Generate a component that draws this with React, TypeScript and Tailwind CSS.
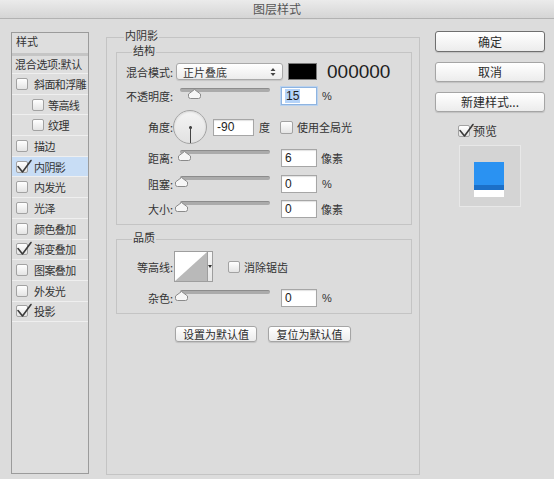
import type { ReactNode } from 'react';

function Check({ checked, className = '' }: { checked?: boolean; className?: string }) {
  return (
    <span
      className={`relative inline-block w-[12px] h-[12px] shrink-0 rounded-[2px] border border-[#a2a2a2] bg-linear-to-b from-[#ffffff] to-[#e4e4e4] ${className}`}
    >
      {checked && (
        <svg className="absolute left-[-1px] top-[-2px] overflow-visible" width="16" height="14" viewBox="0 0 16 14">
          <path d="M2 6.5 L6.5 12 L15 0.5" fill="none" stroke="#3a3a3a" strokeWidth="1.6" strokeLinecap="round" strokeLinejoin="round" />
        </svg>
      )}
    </span>
  );
}

function Slider({ pos }: { pos: number }) {
  return (
    <div className="relative w-[90px] h-[18px] shrink-0">
      <div className="absolute left-0 right-0 top-[1px] h-[4px] rounded-full bg-[#ababab] border-t border-[#8c8c8c]" />
      <svg className="absolute top-[2px]" style={{ left: pos - 6 }} width="13" height="10" viewBox="0 0 13 10">
        <path d="M6.5 0.5 L12.5 5 V7.5 Q12.5 9.5 10.5 9.5 H2.5 Q0.5 9.5 0.5 7.5 V5 Z" fill="#f6f6f6" stroke="#8a8a8a" />
      </svg>
    </div>
  );
}

function NumBox({ value, className = '', selected }: { value: string; className?: string; selected?: boolean }) {
  return (
    <div
      className={`flex items-center shrink-0 bg-white border pl-[3px] font-['Liberation_Sans',sans-serif] text-[12px] text-[#222] ${
        selected ? 'border-[#8fb4e0] shadow-[0_0_0_1px_#b9d2ef]' : 'border-[#a6a6a6] shadow-[inset_0_1px_1px_rgba(0,0,0,0.12)]'
      } ${className}`}
    >
      <span className={selected ? 'bg-[#b5d3f8] px-[1px] leading-[14px]' : 'leading-[14px]'}>{value}</span>
    </div>
  );
}

function Row({ label, className = '', children }: { label: string; className?: string; children: ReactNode }) {
  return (
    <div className={`flex items-center ${className}`}>
      <div className="w-[56px] shrink-0 text-right leading-[14px] whitespace-nowrap">{label}</div>
      {children}
    </div>
  );
}

function Btn({ children, className = '' }: { children: ReactNode; className?: string }) {
  return (
    <div
      className={`flex items-center justify-center shrink-0 rounded-[3px] border bg-linear-to-b from-[#ffffff] to-[#ececec] shadow-[0_1px_1px_rgba(0,0,0,0.12)] leading-none text-[#2a2a2a] ${className}`}
    >
      {children}
    </div>
  );
}

const styles = [
  { name: '斜面和浮雕', checked: false, indent: false },
  { name: '等高线', checked: false, indent: true },
  { name: '纹理', checked: false, indent: true },
  { name: '描边', checked: false, indent: false },
  { name: '内阴影', checked: true, indent: false, active: true },
  { name: '内发光', checked: false, indent: false },
  { name: '光泽', checked: false, indent: false },
  { name: '颜色叠加', checked: false, indent: false },
  { name: '渐变叠加', checked: true, indent: false },
  { name: '图案叠加', checked: false, indent: false },
  { name: '外发光', checked: false, indent: false },
  { name: '投影', checked: true, indent: false },
];

export default function App() {
  return (
    <div className="w-[554px] h-[479px] overflow-hidden flex flex-col bg-[#dcdcdc] text-[11px] text-[#333] font-['Noto_Sans_CJK_SC','Liberation_Sans',sans-serif]">
      {/* title bar */}
      <div className="h-[19px] shrink-0 flex items-center justify-center bg-linear-to-b from-[#ebebeb] to-[#d5d5d5] border-b border-[#b2b2b2] text-[12px] text-[#555]">
        图层样式
      </div>

      <div className="flex flex-1 pl-[11px]">
        {/* style list */}
        <div className="mt-[13px] w-[78px] h-[442px] shrink-0 border border-[#9b9b9b] bg-[#dedede]">
          <div className="h-[20px] pl-[4px] pt-[1px] leading-[14px]">样式</div>
          <div className="h-[3px] bg-[#c5c5c5]" />
          <div className="h-[18px] pl-[3px] pt-[1px] leading-[14px] whitespace-nowrap tracking-[-0.3px] border-b border-[#efefef]">混合选项:默认</div>
          {styles.map((s) => (
            <div
              key={s.name}
              className={`flex items-center h-[20.7px] border-b border-[#efefef] ${s.indent ? 'pl-[20px]' : 'pl-[4px]'} ${
                s.active ? 'bg-[#c8ddf5]' : ''
              }`}
            >
              <Check checked={s.checked} />
              <span className={`leading-[14px] whitespace-nowrap tracking-[-0.6px] ${s.indent ? 'ml-[4px]' : 'ml-[6px]'}`}>{s.name}</span>
            </div>
          ))}
        </div>

        {/* settings */}
        <div className="ml-[17px] mt-[18px] w-[314px] h-[438px] shrink-0 border border-[#c4c4c4]">
          <div className="-mt-[10px] ml-[17px] w-fit px-[1px] bg-[#dcdcdc] leading-[14px]">内阴影</div>

          {/* 结构 */}
          <div className="mt-[10px] ml-[9px] w-[296px] pb-[6px] border border-[#c4c4c4]">
            <div className="-mt-[10px] ml-[15px] w-fit px-[1px] bg-[#dcdcdc] leading-[14px]">结构</div>

            <Row label="混合模式:" className="mt-[6px] h-[17px]">
              <div className="ml-[3px] w-[107px] h-[17px] flex items-center justify-between pl-[6px] pr-[6px] rounded-[3px] border border-[#a9a9a9] bg-linear-to-b from-[#ffffff] to-[#ececec] shadow-[0_1px_1px_rgba(0,0,0,0.1)]">
                <span className="leading-[14px]">正片叠底</span>
                <svg width="6" height="10" viewBox="0 0 6 10">
                  <path d="M3 1 L5.5 4 H0.5 Z M3 9 L5.5 6 H0.5 Z" fill="#444" />
                </svg>
              </div>
              <div className="ml-[5px] w-[29px] h-[17px] bg-black border border-[#7a7a7a]" />
              <span className="ml-[10px] font-['Liberation_Sans',sans-serif] text-[19px] leading-none text-[#1e1e1e]">000000</span>
            </Row>

            <Row label="不透明度:" className="mt-[7px] h-[18px]">
              <div className="ml-[7px]">
                <Slider pos={14} />
              </div>
              <NumBox value="15" selected className="ml-[11px] w-[36px] h-[18px]" />
              <span className="ml-[5px] font-['Liberation_Sans',sans-serif] text-[11px]">%</span>
            </Row>

            <Row label="角度:" className="mt-[5px] h-[34px]">
              <div className="relative w-[34px] h-[34px] shrink-0 rounded-full border border-[#a4a4a4] bg-linear-to-b from-[#f4f4f4] to-[#e2e2e2] shadow-[inset_0_1px_2px_rgba(0,0,0,0.12)]">
                <div className="absolute left-[15px] top-[15px] w-[3px] h-[3px] rounded-full bg-[#333]" />
                <div className="absolute left-[16px] top-[16px] w-[1px] h-[16px] bg-[#444]" />
              </div>
              <NumBox value="-90" className="ml-[6px] w-[41px] h-[17px]" />
              <span className="ml-[5px] leading-[14px]">度</span>
              <Check className="ml-[10px] w-[13px] h-[13px]" />
              <span className="ml-[4px] leading-[14px] whitespace-nowrap">使用全局光</span>
            </Row>

            <Row label="距离:" className="mt-[5px] h-[18px]">
              <div className="ml-[7px]">
                <Slider pos={4} />
              </div>
              <NumBox value="6" className="ml-[11px] w-[36px] h-[18px]" />
              <span className="ml-[4px] leading-[14px]">像素</span>
            </Row>

            <Row label="阻塞:" className="mt-[8px] h-[18px]">
              <div className="ml-[7px]">
                <Slider pos={1} />
              </div>
              <NumBox value="0" className="ml-[11px] w-[36px] h-[18px]" />
              <span className="ml-[5px] font-['Liberation_Sans',sans-serif] text-[11px]">%</span>
            </Row>

            <Row label="大小:" className="mt-[7px] h-[18px]">
              <div className="ml-[7px]">
                <Slider pos={1} />
              </div>
              <NumBox value="0" className="ml-[11px] w-[36px] h-[18px]" />
              <span className="ml-[4px] leading-[14px]">像素</span>
            </Row>
          </div>

          {/* 品质 */}
          <div className="mt-[14px] ml-[9px] w-[296px] pb-[6px] border border-[#c4c4c4]">
            <div className="-mt-[10px] ml-[15px] w-fit px-[1px] bg-[#dcdcdc] leading-[14px]">品质</div>

            <Row label="等高线:" className="mt-[7px] h-[31px]">
              <div className="ml-[1px] w-[39px] h-[31px] shrink-0 flex border border-[#9e9e9e] bg-white">
                <svg width="32" height="29" viewBox="0 0 32 29" className="shrink-0">
                  <path d="M0 29 L32 0 V29 Z" fill="#b9b9b9" />
                </svg>
                <div className="flex-1 flex items-center justify-center border-l border-[#9e9e9e] bg-linear-to-b from-[#f8f8f8] to-[#e6e6e6]">
                  <svg width="4" height="3" viewBox="0 0 4 3">
                    <path d="M0 0 H4 L2 3 Z" fill="#333" />
                  </svg>
                </div>
              </div>
              <Check className="ml-[15px]" />
              <span className="ml-[4px] leading-[14px] whitespace-nowrap">消除锯齿</span>
            </Row>

            <Row label="杂色:" className="mt-[7px] h-[18px]">
              <div className="ml-[7px]">
                <Slider pos={1} />
              </div>
              <NumBox value="0" className="ml-[11px] w-[36px] h-[18px]" />
              <span className="ml-[5px] font-['Liberation_Sans',sans-serif] text-[11px]">%</span>
            </Row>
          </div>

          <div className="mt-[12px] flex justify-center gap-[11px]">
            <Btn className="w-[82px] h-[16px] border-[#a5a5a5]">设置为默认值</Btn>
            <Btn className="w-[83px] h-[16px] border-[#a5a5a5]">复位为默认值</Btn>
          </div>
        </div>

        {/* actions */}
        <div className="ml-[15px] w-[110px] shrink-0 flex flex-col text-[12px]">
          <Btn className="mt-[12px] h-[21px] border-[#6f6f6f]">确定</Btn>
          <Btn className="mt-[10px] h-[20px] border-[#a5a5a5]">取消</Btn>
          <Btn className="mt-[10px] h-[20px] border-[#a5a5a5]">新建样式...</Btn>
          <div className="mt-[12px] pl-[23px] flex items-center h-[13px]">
            <Check checked />
            <span className="ml-[3px] leading-[14px]">预览</span>
          </div>
          <div className="mt-[8px] ml-[24px] w-[62px] h-[62px] border border-[#e8e8e8] bg-[#d4d4d4]">
            <div className="mt-[16px] ml-[14px] w-[30px]">
              <div className="h-[23px] bg-[#2a92f2]" />
              <div className="h-[5px] bg-[#1c70c8]" />
              <div className="h-[7px] bg-white" />
            </div>
          </div>
        </div>
      </div>
    </div>
  );
}
